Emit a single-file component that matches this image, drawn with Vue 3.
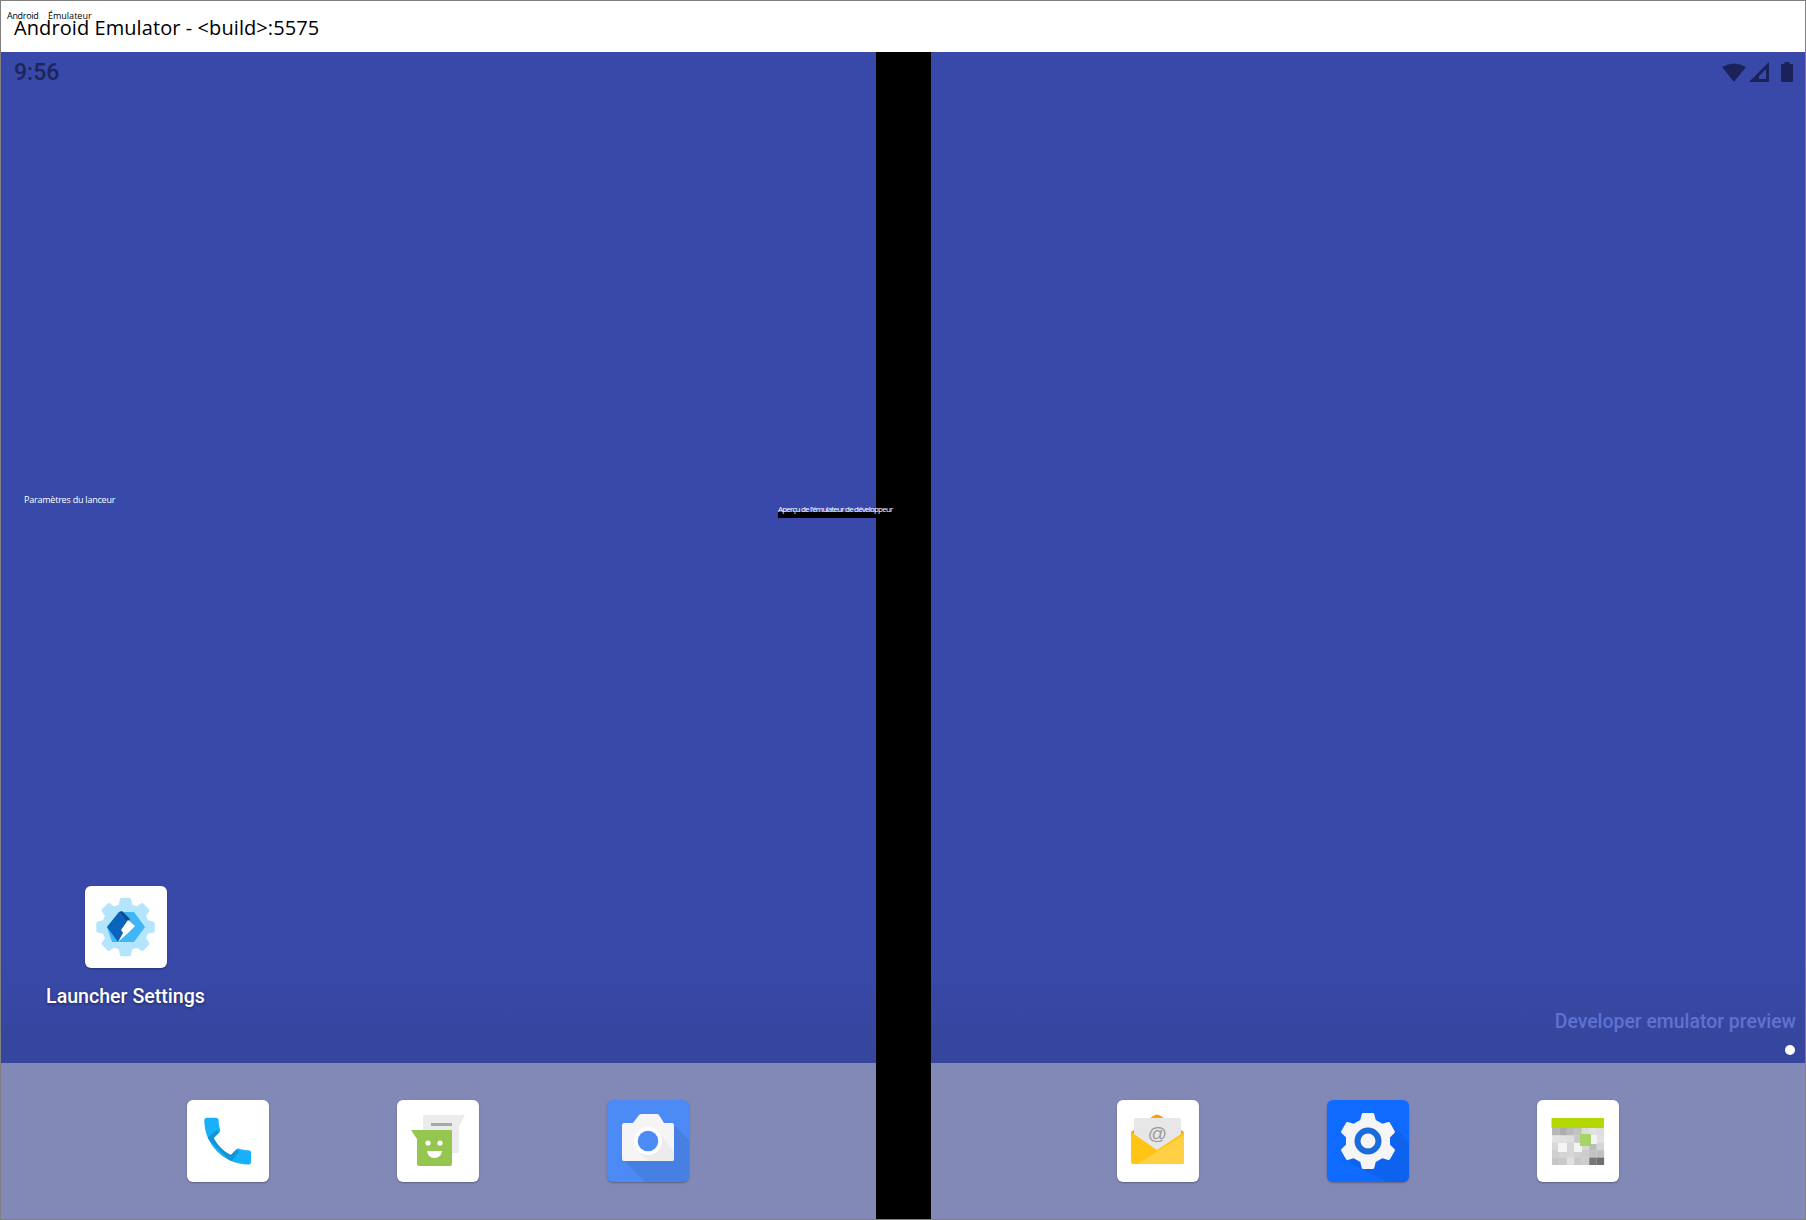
<template>
  <div class="window">
    <header class="titlebar">
      <span class="title">Android Emulator - &lt;build&gt;:5575</span>
      <span class="tiny tiny-android">Android</span>
      <span class="tiny tiny-emu">Émulateur</span>
    </header>

    <div class="screen">
      <section class="pane">
        <div class="status">
          <span class="time">9:56</span>
        </div>
        <div class="desktop">
          <div class="shortcut">
            <div class="app-icon">
              <svg viewBox="0 0 82 82" width="82" height="82">
                <path :d="launcherGear" fill="#b3e5fc" stroke="#b3e5fc" stroke-width="4" stroke-linejoin="round" />
                <path d="M22 41 L34 26 L49 26 L60 41 L49 56 L27 56 Z" fill="#40b6f6" />
                <path d="M22 41 L34 26 L43 35 L37 44 L42 44 L33 56 L22 41 Z" fill="#0a64bc" />
                <path d="M34 26 L37 25 L45 33 L43 36 Z" fill="#0b4a8f" />
                <path d="M43 34 L50 40 L43 47 L33 56 L38 47 L36 44 Z" fill="#fff" />
              </svg>
            </div>
            <span class="shortcut-label">Launcher Settings</span>
          </div>
        </div>
        <div class="dock">
          <div class="app-icon">
            <svg viewBox="0 0 82 82" width="82" height="82">
              <defs>
                <clipPath id="phoneClip">
                  <path :d="phonePath" transform="translate(9.5 9.9) scale(2.6)" />
                </clipPath>
              </defs>
              <path :d="phonePath" transform="translate(9.5 9.9) scale(2.6)" fill="#18b0fb" />
              <path d="M20 38 L30 30 L52 52 L44 62 Z" fill="#1294d8" clip-path="url(#phoneClip)" />
            </svg>
          </div>
          <div class="app-icon">
            <svg viewBox="0 0 82 82" width="82" height="82">
              <path d="M26 16 Q26 15 28 15 L68 15 L62 26 L62 51 Q62 53 60 53 L28 53 Q26 53 26 51 Z" fill="#ececec" />
              <rect x="34" y="23" width="21" height="3" fill="#a8a8a8" />
              <path d="M14 30 L54 30 Q55 30 55 31 L55 64 Q55 66 53 66 L22 66 Q20 66 20 64 L20 39 Z" fill="#94c650" />
              <circle cx="31" cy="43" r="2.6" fill="#fff" />
              <circle cx="43" cy="43" r="2.6" fill="#fff" />
              <path d="M30 51 L45 51 Q44 58 37.5 58 Q31 58 30 51 Z" fill="#fff" />
            </svg>
          </div>
          <div class="app-icon camera">
            <svg viewBox="0 0 82 82" width="82" height="82">
              <path d="M67 25 L82 40 L82 76 Q82 82 76 82 L38 82 L17 61 Z" fill="#4680e2" />
              <path d="M17 23 L26 23 L32 15 Q33 14 35 14 L50 14 Q51 14 52 15 L57 23 L65 23 Q67 23 67 25 L67 59 Q67 61 65 61 L17 61 Q15 61 15 59 L15 25 Q15 23 17 23 Z" fill="#f5f5f5" />
              <path d="M31 51 L41 61 L65 61 Q67 61 67 59 L67 52 L51 31 Z" fill="#ececec" />
              <circle cx="41" cy="41" r="14" fill="#fff" />
              <circle cx="41" cy="41" r="10.3" fill="#4c8bf5" />
            </svg>
          </div>
        </div>
      </section>

      <div class="hinge"></div>

      <section class="pane">
        <div class="status status-right">
          <svg viewBox="0 0 72 22" width="72" height="22">
            <path d="M0 6 Q12 -1 24 6 L12 21 Z" fill="#1b2259" />
            <path d="M27 21 L47 1 L47 21 Z M37 18 L44 18 L44 8 L37 15 Z" fill="#1b2259" fill-rule="evenodd" />
            <path d="M59 4 Q59 3 60 3 L62.5 3 L62.5 1 L67.5 1 L67.5 3 L70 3 Q71 3 71 4 L71 20 Q71 21 70 21 L60 21 Q59 21 59 20 Z" fill="#1b2259" />
          </svg>
        </div>
        <div class="desktop desktop-right">
          <span class="preview">Developer emulator preview</span>
          <span class="page-dot"></span>
        </div>
        <div class="dock">
          <div class="app-icon">
            <svg viewBox="0 0 82 82" width="82" height="82">
              <path d="M14 32 L36 16 Q40 13 44 16 L67 32 L67 50 L14 50 Z" fill="#ffa000" />
              <rect x="17" y="18" width="47" height="36" rx="2" fill="#e7e7e7" />
              <text x="40.5" y="40" class="at">@</text>
              <path d="M14 32 L40 50 L67 32 L67 62 Q67 64 65 64 L16 64 Q14 64 14 62 Z" fill="#ffc414" />
              <path d="M67 35 L67 62 Q67 64 65 64 L20 64 Z" fill="#ffd044" />
            </svg>
          </div>
          <div class="app-icon settings">
            <svg viewBox="0 0 82 82" width="82" height="82">
              <path d="M60 20 L82 42 L82 76 Q82 82 76 82 L60 82 L22 62 Z" fill="#0d63ee" />
              <path :d="settingsGear" fill="#f5f5f5" stroke="#f5f5f5" stroke-width="3" stroke-linejoin="round" />
              <circle cx="41" cy="41" r="10.5" fill="#f5f5f5" stroke="#1a6cdc" stroke-width="6" />
            </svg>
          </div>
          <div class="app-icon">
            <svg viewBox="0 0 82 82" width="82" height="82">
              <rect x="15" y="28" width="52" height="37" fill="#dcdcdc" />
              <rect
                v-for="cell in calendarCells"
                :key="cell.key"
                :x="cell.x"
                :y="cell.y"
                width="7.4"
                height="7.4"
                :fill="cell.fill"
              />
              <rect x="14.5" y="18" width="52.5" height="10" rx="1" fill="#b2d800" />
              <rect x="21" y="43" width="9" height="9" fill="#f4f4f4" />
              <rect x="37" y="43" width="8" height="9" fill="#f4f4f4" />
              <rect x="54" y="35" width="6" height="9" fill="#f4f4f4" />
              <rect x="43" y="34" width="11" height="12" fill="#a6d564" />
            </svg>
          </div>
        </div>
      </section>

      <span class="overlay overlay-launcher">Paramètres du lanceur</span>
      <span class="overlay overlay-band"></span>
      <span class="overlay overlay-preview">Aperçu de l'émulateur de développeur</span>
    </div>
  </div>
</template>

<script setup>
const phonePath =
  'M6.62 10.79c1.44 2.83 3.76 5.14 6.59 6.59l2.2-2.2c.27-.27.67-.36 1.02-.24 1.12.37 2.33.57 3.57.57.55 0 1 .45 1 1V20c0 .55-.45 1-1 1-9.39 0-17-7.61-17-17 0-.55.45-1 1-1h3.5c.55 0 1 .45 1 1 0 1.25.2 2.45.57 3.57.11.35.03.74-.25 1.02l-2.2 2.2z'

// teeth are wide at the base, flat on top
function gearPath(cx, cy, outer, inner, teeth) {
  const step = (Math.PI * 2) / teeth
  const pts = []
  for (let i = 0; i < teeth; i++) {
    const a = -Math.PI / 2 + i * step
    const list = [
      [inner, a - step * 0.3],
      [outer, a - step * 0.17],
      [outer, a + step * 0.17],
      [inner, a + step * 0.3]
    ]
    for (const [r, t] of list) {
      pts.push(`${(cx + r * Math.cos(t)).toFixed(2)} ${(cy + r * Math.sin(t)).toFixed(2)}`)
    }
  }
  return 'M' + pts.join(' L') + ' Z'
}

const launcherGear = gearPath(40.5, 41, 27.5, 21.5, 8)
const settingsGear = gearPath(41, 41, 27, 21, 6)

const shades = [
  ['#b8b8b8', '#aeaeae', '#bababa', '#c2c2c2', '#dcdcdc', '#e2e2e2', '#dedede'],
  ['#e4e4e4', '#e2e2e2', '#dedede', '#c8c8c8', '#bfbfbf', '#cacaca', '#e2e2e2'],
  ['#d8d8d8', '#e0e0e0', '#d6d6d6', '#e0e0e0', '#d8d8d8', '#bcbcbc', '#d6d6d6'],
  ['#cfcfcf', '#d4d4d4', '#d6d6d6', '#d0d0d0', '#cccccc', '#c2c2c2', '#c0c0c0'],
  ['#c6c6c6', '#cacaca', '#e0e0e0', '#c8c8c8', '#cecece', '#777777', '#6f6f6f']
]

const calendarCells = shades.flatMap((row, r) =>
  row.map((fill, c) => ({
    key: `${r}-${c}`,
    x: 15 + c * 7.45,
    y: 28 + r * 7.4,
    fill
  }))
)
</script>

<style>
html,
body {
  margin: 0;
  background: #fff;
}
</style>

<style scoped>
.window {
  position: relative;
  box-sizing: border-box;
  width: 1806px;
  height: 1220px;
  display: flex;
  flex-direction: column;
  border: 1px solid #808080;
  background: #fff;
  overflow: hidden;
}

.titlebar {
  position: relative;
  flex: none;
  height: 51px;
  display: flex;
  align-items: center;
  padding-left: 13px;
  background: #fff;
}

.title {
  font-family: "Open Sans", sans-serif;
  font-size: 20px;
  letter-spacing: 0.08px;
  color: #000;
  line-height: 1;
  margin-top: 2px;
}

.tiny {
  position: absolute;
  top: 9px;
  font-family: "Open Sans", sans-serif;
  font-size: 9px;
  line-height: 12px;
  color: #000;
}

.tiny-android {
  left: 6px;
  letter-spacing: -0.3px;
}

.tiny-emu {
  left: 47px;
}

.screen {
  position: relative;
  flex: 1;
  display: flex;
  min-height: 0;
}

.pane {
  flex: none;
  width: 875px;
  display: flex;
  flex-direction: column;
  background: linear-gradient(to bottom, #3849a9 0, #3849a9 900px, #36459c 1011px);
}

.hinge {
  flex: none;
  width: 55px;
  background: #000;
}

.pane:last-of-type {
  width: 874px;
}

.status {
  flex: none;
  height: 36px;
  display: flex;
  align-items: center;
  justify-content: space-between;
  padding: 0 13px;
}

.status-right {
  justify-content: flex-end;
  padding: 0 11px 0 0;
}

.status-right svg {
  margin-top: 4px;
}

.time {
  font-family: Roboto, sans-serif;
  font-size: 23px;
  font-weight: 500;
  color: #1e2558;
  margin-top: 4px;
}

.desktop {
  flex: 1;
  min-height: 0;
  display: flex;
  flex-direction: column;
  align-items: flex-start;
  justify-content: flex-end;
}

.desktop-right {
  align-items: flex-end;
}

.shortcut {
  width: 249px;
  display: flex;
  flex-direction: column;
  align-items: center;
  margin-bottom: 54px;
}

.shortcut-label {
  margin-top: 17px;
  font-family: Roboto, sans-serif;
  font-size: 19.6px;
  line-height: 24px;
  font-weight: 500;
  color: #fff;
  text-shadow: 0 1px 3px rgba(0, 0, 0, 0.45);
  white-space: nowrap;
}

.preview {
  font-family: Roboto, sans-serif;
  font-size: 19.4px;
  font-weight: 500;
  line-height: 24px;
  color: #6072d0;
  margin-right: 9px;
}

.page-dot {
  width: 10px;
  height: 10px;
  border-radius: 50%;
  background: #fff;
  margin: 11px 10px 8px 0;
}

.dock {
  flex: none;
  height: 156px;
  box-sizing: border-box;
  padding: 37px 0 0 186px;
  display: flex;
  gap: 128px;
  background: #8389b6;
}

.app-icon {
  flex: none;
  width: 82px;
  height: 82px;
  border-radius: 6px;
  background: #fff;
  box-shadow: 0 1px 2px rgba(0, 0, 0, 0.3);
  overflow: hidden;
}

.app-icon svg {
  display: block;
}

.camera {
  background: #4c8bf5;
}

.settings {
  background: #0f6bff;
}

.at {
  font-family: "Liberation Sans", sans-serif;
  font-size: 19px;
  fill: #9a9a9a;
  text-anchor: middle;
}

.overlay {
  position: absolute;
  white-space: nowrap;
  font-family: "Open Sans", sans-serif;
  font-size: 9px;
  line-height: 12px;
  color: #fff;
}

.overlay-launcher {
  left: 23px;
  top: 442px;
  letter-spacing: -0.22px;
}

.overlay-band {
  left: 777px;
  top: 460px;
  width: 98px;
  height: 6px;
  background: #000;
}

.overlay-preview {
  left: 777px;
  top: 451px;
  font-size: 8px;
  letter-spacing: -0.8px;
}
</style>
